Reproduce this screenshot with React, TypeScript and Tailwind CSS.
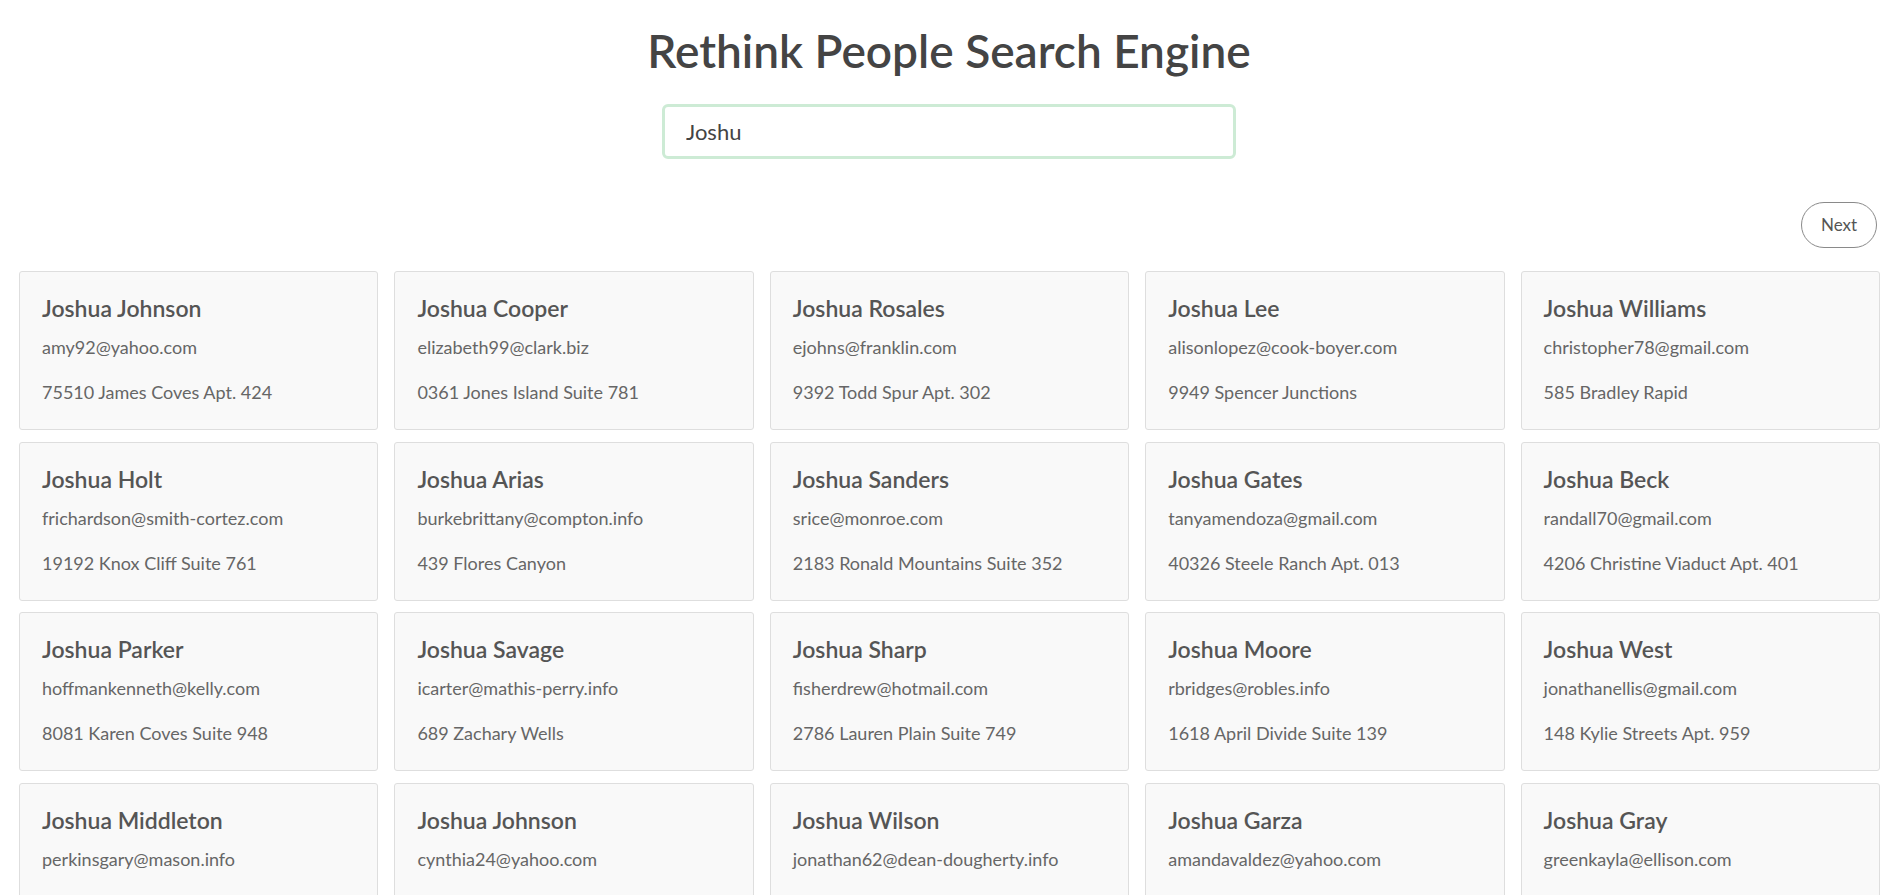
const people = [
  { name: "Joshua Johnson", email: "amy92@yahoo.com", address: "75510 James Coves Apt. 424" },
  { name: "Joshua Cooper", email: "elizabeth99@clark.biz", address: "0361 Jones Island Suite 781" },
  { name: "Joshua Rosales", email: "ejohns@franklin.com", address: "9392 Todd Spur Apt. 302" },
  { name: "Joshua Lee", email: "alisonlopez@cook-boyer.com", address: "9949 Spencer Junctions" },
  { name: "Joshua Williams", email: "christopher78@gmail.com", address: "585 Bradley Rapid" },
  { name: "Joshua Holt", email: "frichardson@smith-cortez.com", address: "19192 Knox Cliff Suite 761" },
  { name: "Joshua Arias", email: "burkebrittany@compton.info", address: "439 Flores Canyon" },
  { name: "Joshua Sanders", email: "srice@monroe.com", address: "2183 Ronald Mountains Suite 352" },
  { name: "Joshua Gates", email: "tanyamendoza@gmail.com", address: "40326 Steele Ranch Apt. 013" },
  { name: "Joshua Beck", email: "randall70@gmail.com", address: "4206 Christine Viaduct Apt. 401" },
  { name: "Joshua Parker", email: "hoffmankenneth@kelly.com", address: "8081 Karen Coves Suite 948" },
  { name: "Joshua Savage", email: "icarter@mathis-perry.info", address: "689 Zachary Wells" },
  { name: "Joshua Sharp", email: "fisherdrew@hotmail.com", address: "2786 Lauren Plain Suite 749" },
  { name: "Joshua Moore", email: "rbridges@robles.info", address: "1618 April Divide Suite 139" },
  { name: "Joshua West", email: "jonathanellis@gmail.com", address: "148 Kylie Streets Apt. 959" },
  { name: "Joshua Middleton", email: "perkinsgary@mason.info", address: "5512 Ryan Mills" },
  { name: "Joshua Johnson", email: "cynthia24@yahoo.com", address: "301 Wood Court Apt. 112" },
  { name: "Joshua Wilson", email: "jonathan62@dean-dougherty.info", address: "7734 Fisher Lodge" },
  { name: "Joshua Garza", email: "amandavaldez@yahoo.com", address: "920 Harris Ridge Suite 455" },
  { name: "Joshua Gray", email: "greenkayla@ellison.com", address: "66 Martin Pass" },
]

const App = () => {
  return (
    <div className="h-screen overflow-hidden bg-white font-['Lato','Noto_Sans',sans-serif] text-[#444]">
      <header className="flex flex-col items-center pt-[21px] pl-[13px]">
        <h1 className="text-[46px] leading-[60px] font-semibold text-[#444]">Rethink People Search Engine</h1>
        <input
          defaultValue="Joshu"
          autoFocus
          className="mt-[23px] w-[574px] h-[55px] rounded-[6px] border-[3px] border-[#cdebd5] px-[21px] text-[22px] text-[#444] outline-none"
        />
      </header>

      <div className="flex justify-end pr-[8px] mt-[43px]">
        <button className="w-[76px] h-[46px] rounded-full border border-[#8a8a8a] text-[17px] text-[#555] bg-white">
          Next
        </button>
      </div>

      <main className="grid grid-cols-5 gap-x-[16px] gap-y-[11.7px] pl-[19px] pr-[5px] mt-[23px]">
        {people.map((p, i) => (
          <section key={i} className="h-[159px] rounded-[3px] border border-[#dedede] bg-[#f9f9f9] px-[22px] pt-[23px]">
            <div className="text-[23px] leading-[26px] font-semibold text-[#555]">{p.name}</div>
            <div className="mt-[13px] text-[18px] leading-[26px] text-[#666]">{p.email}</div>
            <div className="mt-[19px] text-[18px] leading-[26px] text-[#666]">{p.address}</div>
          </section>
        ))}
      </main>
    </div>
  )
}

export default App
